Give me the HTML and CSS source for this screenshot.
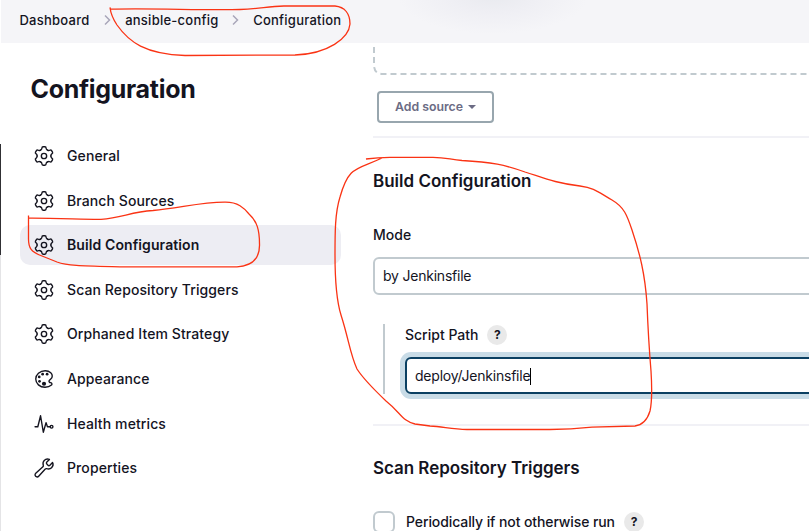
FILE: index.html
```
<!DOCTYPE html>
<html lang="en">
<head>
<meta charset="utf-8">
<title>ansible-config Configuration</title>
<link rel="stylesheet" href="styles.css">
</head>
<body>
<svg class="defs" aria-hidden="true">
  <path id="tooth" d="M-80-138.600Q-50-156-49-182Q-48-216-22-216H22Q48-216 49-182Q50-156 80-138.600"/>
  <symbol id="gear" viewBox="-256 -256 512 512"><circle r="62"/><use href="#tooth"/><use href="#tooth" transform="rotate(60)"/><use href="#tooth" transform="rotate(120)"/><use href="#tooth" transform="rotate(180)"/><use href="#tooth" transform="rotate(240)"/><use href="#tooth" transform="rotate(300)"/></symbol>
  <symbol id="palette" viewBox="0 0 512 512"><path d="M430.11 347.9c-6.6-6.1-16.3-7.6-24.6-9-11.5-1.9-15.9-4-22.6-10-14.3-12.7-14.3-31.1 0-43.8l30.3-26.9c46.4-41 46.4-108.2 0-149.2-34.2-30.1-80.1-45-127.8-45-55.7 0-113.9 20.3-158.8 60.1-83.5 73.8-83.5 194.7 0 268.5 41.5 36.7 97.5 55 152.9 55.4h1.7c55.4 0 110-17.9 148.8-52.4 14.4-12.7 12-36.6.1-47.7z"/><g class="dots"><circle cx="144" cy="208" r="32"/><circle cx="152" cy="311" r="32"/><circle cx="224" cy="144" r="32"/><circle cx="256" cy="367" r="48"/><circle cx="328" cy="144" r="32"/></g></symbol>
  <symbol id="pulse" viewBox="0 0 512 512"><path d="M48 320h64l64-256 64 384 64-224 32 96h64"/><circle cx="432" cy="320" r="32"/></symbol>
  <symbol id="wrench" viewBox="0 0 512 512"><path d="M393.87 190a32.1 32.1 0 01-45.25 0l-26.57-26.57a32.09 32.09 0 010-45.26L382.19 58a1 1 0 00-.3-1.64c-38.82-16.64-89.15-8.16-121.11 23.57-30.58 30.35-32.32 76-21.12 115.84a31.93 31.93 0 01-9.06 32.08L64 380a48.17 48.17 0 1068 68l153.86-167a31.93 31.93 0 0131.6-9.13c39.54 10.59 84.54 8.6 114.72-21.19 32.49-32 39.5-88.56 23.75-120.93a1 1 0 00-1.6-.26z"/></symbol>
  <symbol id="chevron" viewBox="0 0 7 12"><path d="M1 1.500l4.500 4.500-4.500 4.500"/></symbol>
</svg>
<div class="page">
  <header class="crumbs">
    <span class="crumb crumb-home">Dashboard</span>
    <svg class="chevron"><use href="#chevron"/></svg>
    <span class="crumb crumb-project">ansible-config</span>
    <svg class="chevron"><use href="#chevron"/></svg>
    <span class="crumb crumb-page">Configuration</span>
  </header>
  <div class="layout">
    <aside class="sidebar">
      <h1>Configuration</h1>
      <nav class="tasks">
        <a class="task"><svg class="icon"><use href="#gear"/></svg><span>General</span></a>
        <a class="task"><svg class="icon"><use href="#gear"/></svg><span>Branch Sources</span></a>
        <a class="task active"><svg class="icon"><use href="#gear"/></svg><span>Build Configuration</span></a>
        <a class="task"><svg class="icon"><use href="#gear"/></svg><span>Scan Repository Triggers</span></a>
        <a class="task"><svg class="icon"><use href="#gear"/></svg><span>Orphaned Item Strategy</span></a>
        <a class="task"><svg class="icon"><use href="#palette"/></svg><span>Appearance</span></a>
        <a class="task"><svg class="icon"><use href="#pulse"/></svg><span>Health metrics</span></a>
        <a class="task"><svg class="icon"><use href="#wrench"/></svg><span>Properties</span></a>
      </nav>
    </aside>
    <main class="content">
      <svg class="dropzone" viewBox="0 0 436 28"><path d="M1 0V18Q1 27 10 27H436"/></svg>
      <button class="add">Add source<i class="caret"></i></button>
      <hr>
      <h2 class="build-title">Build Configuration</h2>
      <div class="label mode-label">Mode</div>
      <div class="field mode-field">by Jenkinsfile</div>
      <div class="nested">
        <div class="label path-label"><span>Script Path</span><b class="help">?</b></div>
        <div class="field focused">deploy/Jenkinsfile<i class="cursor"></i></div>
      </div>
      <hr>
      <h2 class="scan-title">Scan Repository Triggers</h2>
      <div class="check"><i class="box"></i><span>Periodically if not otherwise run</span><b class="help">?</b></div>
    </main>
  </div>
  <svg class="marks" viewBox="0 0 809 531">
    <path d="M110 7.500L110.500 9.200C150 8 205 10.500 240 9.500C260 9 268 6 284 6H335C345 7 350 14 350 24C349 38 328 54 295 55L185 55.500C145 54 129 42 117 25Q111 16 110 7.500"/>
    <path d="M28.500 215.500V218.200C55 218 85 219.500 101 219.300C122 218 130 212 153 210.500C180 208 202 202 225 202.200C238 202 244 208 249 214C257 221 259.500 230 259.500 244C260 259 252 266 237 266.800H120C83 266 68 266 57 262L42 256C31 252 28.500 248 28.500 239Z"/>
    <path d="M366 159C373 158 380 157.300 390 157.300H433C446 157.500 450 159.500 462 160.500C492 162 505 165 525 172C544 178 555 183 580 186C595 188 598 192 612 200C624 207 627 215 632 230C640 254 645 274 647 304C648 330 649 347 651 371C652 387 652 402 650 411C647 421 642 425 635 426L592 427.200C580 428.500 568 429.500 550 429.500H467C452 429 444 427 430 426L415 424C402 421 401 413 386 401Q364 380 357 369C350 354 349 340 341 315C336 299 335 278 335 255C335 232 335 213 340 197C349 165 357 170 382 158"/>
  </svg>
</div>
</body>
</html>
```
FILE: styles.css
```
* { box-sizing: border-box; }
body {
  margin: 0;
  background: #fff;
  color: #14141f;
  font: 500 14px/20px Inter, "Liberation Sans", sans-serif;
}
.defs { position: absolute; width: 0; height: 0; }
.page { position: relative; width: 809px; height: 531px; overflow: hidden; }
.page::before {
  content: "";
  position: absolute;
  left: 0;
  top: 0;
  width: 1px;
  height: 531px;
  background: linear-gradient(#fff 144px, #303034 144px, #303034 255px, #e4e4e6 255px);
}
.crumbs {
  display: flex;
  align-items: center;
  height: 43px;
  margin-left: 1px;
  padding: 0 0 3px 18.500px;
  background: radial-gradient(ellipse 95px 38px at 492px -4px, #e9eaef 0, #efeff4 45%, #f5f5f8 100%);
  font-size: 13px;
  letter-spacing: .24px;
}
.crumb { white-space: nowrap; }
.crumb-home { width: 70.700px; }
.crumb-project { width: 93px; }
.chevron { flex: none; width: 7px; height: 12px; margin: 0 14px; fill: none; stroke: #a9a7b9; stroke-width: 1.500; }
.layout { display: flex; height: 488px; }
.sidebar { width: 341px; padding: 30px 0 0 20px; flex: none; }
h1 { margin: 0 0 31px 10.500px; font-size: 25px; line-height: 32px; font-weight: 700; letter-spacing: -.3px; }
.tasks { display: flex; flex-direction: column; gap: 4.600px; letter-spacing: .1px; }
.task { display: flex; align-items: center; gap: 12px; height: 40px; padding-left: 13px; border-radius: 10px; }
.task.active { background: #ededf3; font-weight: 600; }
.icon { width: 22px; height: 22px; fill: none; stroke: #14141f; stroke-width: 32; stroke-linecap: round; stroke-linejoin: round; }
.dots { fill: #14141f; stroke: none; }
.content { flex: 1; min-width: 0; margin-left: 32px; padding-top: 4px; }
.dropzone { display: block; width: 436px; height: 28px; fill: none; stroke: #c1cacf; stroke-width: 2; stroke-dasharray: 6 4; }
.add {
  display: flex;
  align-items: center;
  justify-content: center;
  gap: 5px;
  width: 117px;
  height: 32px;
  margin: 16px 0 13px 4px;
  padding: 0;
  background: #fff;
  border: 2px solid #98a6ae;
  border-radius: 4px;
  color: #6b6b84;
  font: 600 12.300px/18px Inter, sans-serif;
}
.caret { border: 4px solid transparent; border-top-color: currentColor; border-bottom: 0; }
hr { height: 2px; margin: 0; border: 0; background: #f1f1f6; }
h2 { margin: 0; font-size: 17px; line-height: 24px; font-weight: 600; }
.build-title { margin-top: 31px; }
.label { line-height: 20px; }
.mode-label { margin-top: 32px; height: 24px; }
.field {
  height: 38px;
  margin-right: -20px;
  padding-left: 8px;
  border: 2px solid #c1cacf;
  border-radius: 6px;
  background: #fff;
  line-height: 34px;
  font-weight: 400;
  letter-spacing: -.22px;
}
.mode-field { margin-top: 8px; }
.nested { height: 70px; margin: 29px 0 30px 10px; padding-left: 20px; border-left: 2px solid #c1cacf; }
.path-label { display: flex; align-items: center; gap: 9px; height: 22px; }
.help {
  width: 20px;
  height: 20px;
  border-radius: 50%;
  background: #e9e9e9;
  text-align: center;
  font-size: 12px;
  font-weight: 700;
}
.focused { height: 37px; margin-top: 11px; border-color: #0b4062; box-shadow: 0 0 0 5px #c9dce7; }
.cursor { display: inline-block; width: 1px; height: 17px; background: #000; vertical-align: -4px; }
.scan-title { margin-top: 30px; letter-spacing: -.05px; }
.check { display: flex; align-items: center; height: 22px; margin-top: 31px; letter-spacing: -.1px; }
.box { width: 22px; height: 22px; margin-right: 11px; border: 2px solid #c1cacf; border-radius: 6px; }
.check .help { margin-left: 9px; }
.marks { position: absolute; left: 0; top: 0; width: 809px; height: 531px; fill: none; stroke: #fa3314; stroke-width: 1.300; }
```
